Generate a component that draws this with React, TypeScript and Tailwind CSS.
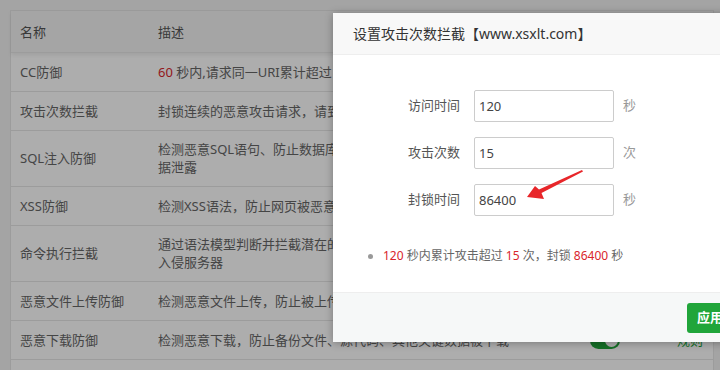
import React from "react";

const font = { fontFamily: '"Noto Sans", "Noto Sans CJK SC", sans-serif' };

type Row = { name: string; desc: React.ReactNode; on: boolean; tall?: boolean };

const rows: Row[] = [
  {
    name: "CC防御",
    desc: (
      <>
        <span className="text-[#d9262c]">60</span> 秒内,请求同一URI累计超过 <span className="text-[#d9262c]">120</span> 次,封锁IP{" "}
        <span className="text-[#d9262c]">300</span> 秒
      </>
    ),
    on: true,
  },
  { name: "攻击次数拦截", desc: "封锁连续的恶意攻击请求，请到全局设置中修改拦截规则", on: true },
  {
    name: "SQL注入防御",
    desc: (
      <>
        检测恶意SQL语句、防止数据库被非法获取或篡改，导致数
        <br />
        据泄露
      </>
    ),
    on: true,
    tall: true,
  },
  { name: "XSS防御", desc: "检测XSS语法，防止网页被恶意篡改、插入恶意代码", on: true },
  {
    name: "命令执行拦截",
    desc: (
      <>
        通过语法模型判断并拦截潜在的命令执行攻击，防止黑客
        <br />
        入侵服务器
      </>
    ),
    on: true,
    tall: true,
  },
  { name: "恶意文件上传防御", desc: "检测恶意文件上传，防止被上传木马、后门程序", on: true },
  { name: "恶意下载防御", desc: "检测恶意下载，防止备份文件、源代码、其他关键数据被下载", on: true },
];

function Toggle({ on }: { on: boolean }) {
  return (
    <div className={`relative w-[30px] h-[17px] rounded-full ${on ? "bg-[#20a53a]" : "bg-[#ccc]"}`}>
      <div className="absolute top-[2px] right-[2px] w-[13px] h-[13px] rounded-full bg-white" />
    </div>
  );
}

function FormRow({ label, value, unit }: { label: string; value: string; unit: string }) {
  return (
    <div className="flex items-center">
      <label className="w-[127px] text-right text-[13px] text-[#555]">{label}</label>
      <input
        readOnly
        value={value}
        className="ml-[14px] w-[140px] h-[32px] border border-[#ccc] rounded-[2px] pl-[4px] text-[13px] text-[#444] outline-none"
        style={font}
      />
      <span className="ml-[9px] text-[13px] text-[#999]">{unit}</span>
    </div>
  );
}

export default function App() {
  return (
    <div className="relative w-[720px] h-[370px] overflow-hidden bg-[#f2f2f2]" style={font}>
      {/* page behind the dialog */}
      <div className="pt-[10px] pl-[10px] w-[714px]">
        <div className="bg-white border border-[#e6e6e6] text-[13px] leading-[18px] text-[#666] pb-[30px]">
          <div className="grid grid-cols-[137px_412px_90px_1fr] bg-[#f4f4f4] border-b border-[#e6e6e6] shadow-[0_2px_4px_rgba(0,0,0,0.08)]">
            <div className="pl-[9px] pt-[12px] pb-[11px] text-[#555]">名称</div>
            <div className="pl-[10px] pt-[12px] pb-[11px] text-[#555]">描述</div>
            <div className="pt-[12px] pb-[11px] text-center text-[#555]">状态</div>
            <div className="pr-[10px] pt-[12px] pb-[11px] text-right text-[#555]">操作</div>
          </div>
          {rows.map((r) => (
            <div
              key={r.name}
              className={`grid grid-cols-[137px_412px_90px_1fr] items-center border-b border-[#e6e6e6] ${
                r.tall ? "pt-[9px] pb-[10px]" : "py-[10px]"
              }`}
            >
              <div className="pl-[9px]">{r.name}</div>
              <div className="pl-[10px]">{r.desc}</div>
              <div className="flex justify-center">
                <Toggle on={r.on} />
              </div>
              <div className="pr-[10px] text-right text-[#20a53a]">规则</div>
            </div>
          ))}
        </div>
      </div>

      {/* shade */}
      <div className="absolute inset-0 bg-black/[0.32]" />

      {/* dialog */}
      <div className="absolute left-[333px] top-[13px] w-[460px] bg-white shadow-[0_1px_8px_rgba(0,0,0,0.3)]">
        <div className="h-[42px] bg-[#f8f8f8] border-b border-[#eee] pl-[20px] text-[14px] leading-[41px] text-[#333]">
          设置攻击次数拦截【www.xsxlt.com】
        </div>
        <div className="pt-[35px] pb-[27px]">
          <div className="flex flex-col gap-[15px]">
            <FormRow label="访问时间" value="120" unit="秒" />
            <FormRow label="攻击次数" value="15" unit="次" />
            <FormRow label="封锁时间" value="86400" unit="秒" />
          </div>
          <div className="mt-[31px] flex items-center pl-[35px] text-[12px] leading-[18px] text-[#666]">
            <span className="w-[5px] h-[5px] rounded-full bg-[#999]" />
            <span className="ml-[10px]">
              <span className="text-[#d9262c]">120</span> 秒内累计攻击超过 <span className="text-[#d9262c]">15</span> 次，封锁{" "}
              <span className="text-[#d9262c]">86400</span> 秒
            </span>
          </div>
        </div>
        <div className="h-[50px] bg-[#f6f8f8] border-t border-[#eee] flex items-start pt-[10px] pl-[354px] gap-[6px]">
          <button className="h-[30px] px-[10px] rounded-[3px] bg-[#20a53a] text-white text-[13px] font-bold">应用</button>
          <button className="h-[30px] px-[10px] rounded-[3px] bg-[#e6e6e6] text-[#555] text-[13px]">关闭</button>
        </div>
      </div>

      {/* red annotation arrow */}
      <svg className="absolute left-[515px] top-[165px]" width="75" height="40" viewBox="0 0 75 40">
        <polygon points="12,32 20,21 24,24.5 67,5 68,6.5 26.5,28 29,34" fill="#e8262a" />
      </svg>
    </div>
  );
}
